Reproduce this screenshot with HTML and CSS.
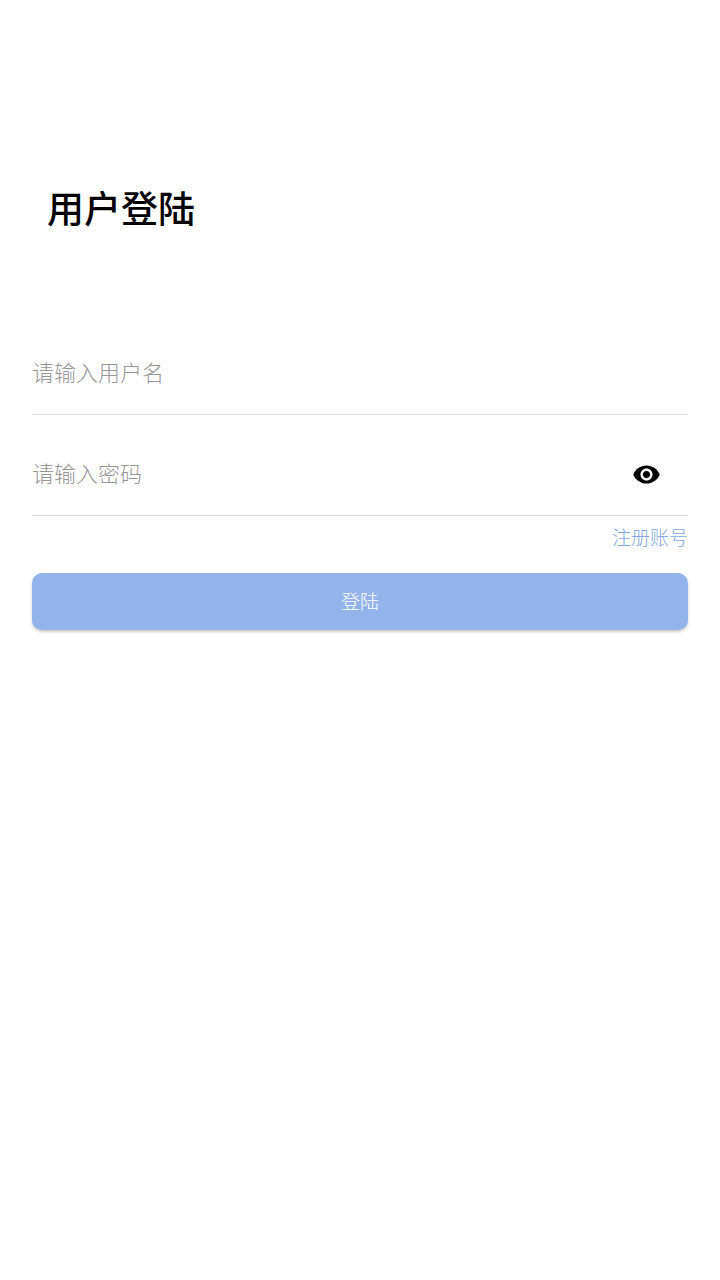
FILE: index.html
```html
<!DOCTYPE html>
<html lang="zh-CN">
<head>
<meta charset="utf-8">
<title>用户登陆</title>
<link rel="stylesheet" href="styles.css">
</head>
<body>
<main class="page">
  <h1 class="title">用户登陆</h1>
  <form class="form">
    <div class="field">
      <input class="input" type="text" placeholder="请输入用户名">
    </div>
    <div class="field">
      <input class="input" type="password" placeholder="请输入密码">
      <svg class="eye" viewBox="0 0 24 24" width="29" height="29" aria-hidden="true"><path d="M12 4.5C7 4.5 2.73 7.61 1 12c1.73 4.39 6 7.5 11 7.5s9.27-3.11 11-7.5c-1.73-4.39-6-7.5-11-7.5zM12 17c-2.76 0-5-2.24-5-5s2.24-5 5-5 5 2.24 5 5-2.24 5-5 5zm0-8c-1.66 0-3 1.34-3 3s1.34 3 3 3 3-1.34 3-3-1.34-3-3-3z"/></svg>
    </div>
    <div class="links"><a class="register">注册账号</a></div>
    <button class="submit" type="button">登陆</button>
  </form>
</main>
</body>
</html>
```
FILE: styles.css
```css
* { box-sizing: border-box; }
html, body { margin: 0; padding: 0; background: #fff; }
body { font-family: "Roboto", "Noto Sans CJK SC", sans-serif; }
.page { padding: 0 32px; height: 1280px; }
.title {
  margin: 0;
  padding: 185px 0 0 15px;
  height: 314px;
  font-size: 37px;
  line-height: 52px;
  font-weight: 500;
  color: #000;
}
.form { display: flex; flex-direction: column; }
.field {
  display: flex;
  align-items: center;
  height: 101px;
  padding-top: 19px;
  border-bottom: 1px solid #dcdcdc;
}
.input {
  flex: 1;
  min-width: 0;
  border: 0;
  outline: 0;
  padding: 0;
  background: transparent;
  font-family: inherit;
  font-size: 22px;
  font-weight: 300;
  height: 40px;
  color: #000;
}
.input::placeholder { color: #969696; opacity: 1; }
.eye { flex: none; margin-right: 27px; }
.links { display: flex; justify-content: flex-end; height: 57px; padding-top: 9px; }
.register { font-size: 19px; line-height: 28px; font-weight: 300; color: #82a8e8; }
.submit {
  height: 57px;
  padding: 0 0 3px;
  border: 0;
  border-radius: 10px;
  background: #93b4eb;
  color: #fff;
  font-family: inherit;
  font-size: 19px;
  font-weight: 300;
  box-shadow: 0 2px 3px rgba(0,0,0,.2);
}
```
